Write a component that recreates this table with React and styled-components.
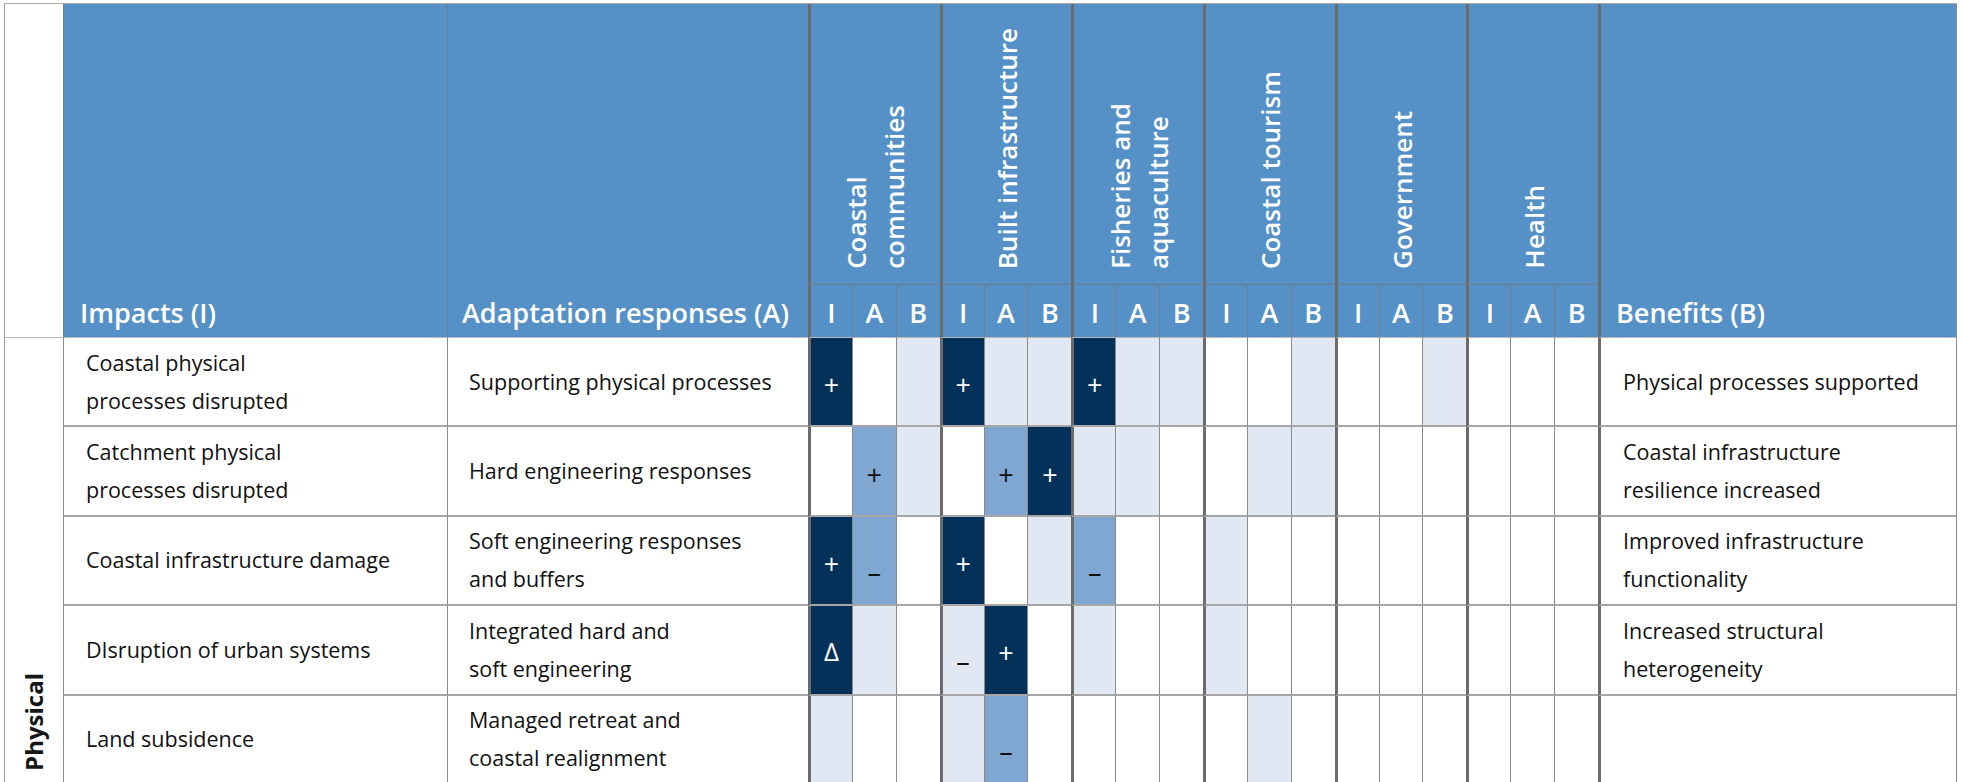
import React from "react";
import styled, { createGlobalStyle } from "styled-components";

const GlobalStyle = createGlobalStyle`
  html, body {
    margin: 0;
    padding: 0;
    background: #fff;
  }
  body {
    height: 782px;
    overflow: hidden;
    font-family: "Open Sans", "DejaVu Sans", sans-serif;
  }
`;

const c = {
  header: "#5591c6",
  navy: "#043159",
  mid: "#80a7d2",
  light: "#e1e8f4",
  groupLine: "#6b6b6b",
  thinLine: "#8a8a8a",
  rowLine: "#a6a6a6",
  headLine: "#737b84",
};

const fills = { n: c.navy, m: c.mid, l: c.light, w: "#fff" };

const Table = styled.div`
  display: grid;
  grid-template-columns: 59px 384px 361px repeat(18, 43.9px) 359px;
  grid-template-rows: 281px 53px repeat(5, 89.4px);
  width: max-content;
  margin: 3px 0 0 4px;
  border-top: 1px solid #a9a9a9;
`;

const Corner = styled.div`
  grid-row: 1 / span 2;
  background: #fff;
  border-left: 1px solid #9a9a9a;
  border-bottom: 1px solid #b8b8b8;
`;

const HeadCell = styled.div`
  grid-row: 1 / span 2;
  display: flex;
  align-items: flex-end;
  padding: 0 0 11px ${({ $pad }) => $pad || 15}px;
  background: ${c.header};
  border-left: ${({ $thick }) => ($thick ? `3px solid ${c.groupLine}` : `1px solid ${c.headLine}`)};
  border-right: ${({ $last }) => ($last ? `1px solid ${c.thinLine}` : "none")};
  border-bottom: 1px solid #b8b8b8;
  color: #fff;
  font-size: 27px;
  font-weight: 600;
  line-height: 27px;
  white-space: nowrap;
`;

const GroupHead = styled.div`
  grid-column: span 3;
  display: flex;
  align-items: flex-end;
  justify-content: center;
  padding-bottom: 15px;
  background: ${c.header};
  border-left: 3px solid ${c.groupLine};
  border-bottom: 1px solid ${c.headLine};
`;

const VerticalLabel = styled.span`
  writing-mode: vertical-rl;
  transform: rotate(180deg);
  color: #fff;
  font-size: 26px;
  font-weight: 600;
  line-height: 38px;
  white-space: pre;
`;

const SubHead = styled.div`
  display: flex;
  align-items: flex-end;
  justify-content: center;
  padding-bottom: 11px;
  background: ${c.header};
  border-left: ${({ $first }) => ($first ? `3px solid ${c.groupLine}` : `1px solid ${c.headLine}`)};
  border-bottom: 1px solid #b8b8b8;
  color: #fff;
  font-size: 27px;
  font-weight: 600;
  line-height: 27px;
`;

const CategoryCell = styled.div`
  grid-row: 3 / span 5;
  display: flex;
  align-items: flex-end;
  justify-content: center;
  padding-bottom: 14px;
  border-left: 1px solid #9a9a9a;
`;

const CategoryLabel = styled.span`
  writing-mode: vertical-rl;
  transform: rotate(180deg);
  color: #161616;
  font-size: 24px;
  font-weight: 700;
  line-height: 1;
`;

const TextCell = styled.div`
  display: flex;
  align-items: center;
  padding-left: ${({ $pad }) => $pad || 22}px;
  border-left: ${({ $thick }) => ($thick ? `3px solid ${c.groupLine}` : `1px solid ${c.thinLine}`)};
  border-right: ${({ $last }) => ($last ? `1px solid ${c.thinLine}` : "none")};
  border-bottom: 2px solid ${c.rowLine};
  color: #111;
  font-size: 21.5px;
  line-height: 38px;
  white-space: pre-line;
`;

const Mark = styled.div`
  display: flex;
  align-items: center;
  justify-content: center;
  background: ${({ $fill }) => fills[$fill]};
  border-left: ${({ $first }) => ($first ? `3px solid ${c.groupLine}` : `1px solid ${c.thinLine}`)};
  border-bottom: 2px solid ${c.rowLine};
  color: ${({ $fill }) => ($fill === "n" ? "#fff" : "#111")};
  line-height: 1;
`;

const Sign = styled.span`
  font-size: ${({ $size }) => $size}px;
  font-weight: 400;
  transform: translateY(${({ $shift }) => $shift}px);
`;

const groups = [
  "Coastal\ncommunities",
  "Built infrastructure",
  "Fisheries and\naquaculture",
  "Coastal tourism",
  "Government",
  "Health",
];

const rows = [
  {
    impact: "Coastal physical\nprocesses disrupted",
    response: "Supporting physical processes",
    benefit: "Physical processes supported",
    marks: ["n+", "w", "l", "n+", "l", "l", "n+", "l", "l", "w", "w", "l", "w", "w", "l", "w", "w", "w"],
  },
  {
    impact: "Catchment physical\nprocesses disrupted",
    response: "Hard engineering responses",
    benefit: "Coastal infrastructure\nresilience increased",
    marks: ["w", "m+", "l", "w", "m+", "n+", "l", "l", "w", "w", "l", "l", "w", "w", "w", "w", "w", "w"],
  },
  {
    impact: "Coastal infrastructure damage",
    response: "Soft engineering responses\nand buffers",
    benefit: "Improved infrastructure\nfunctionality",
    marks: ["n+", "m-", "w", "n+", "w", "l", "m-", "w", "w", "l", "w", "w", "w", "w", "w", "w", "w", "w"],
  },
  {
    impact: "DIsruption of urban systems",
    response: "Integrated hard and\nsoft engineering",
    benefit: "Increased structural\nheterogeneity",
    marks: ["nΔ", "l", "w", "l-", "n+", "w", "l", "w", "w", "l", "w", "w", "w", "w", "w", "w", "w", "w"],
  },
  {
    impact: "Land subsidence",
    response: "Managed retreat and\ncoastal realignment",
    benefit: "",
    marks: ["l", "w", "w", "l", "m-", "w", "w", "w", "w", "w", "l", "w", "w", "w", "w", "w", "w", "w"],
  },
];

// size and vertical nudge for each sign
const signs = {
  "+": { text: "+", size: 27, shift: 3 },
  "-": { text: "–", size: 27, shift: 11 },
  "Δ": { text: "Δ", size: 26, shift: 1 },
};

const MarkCell = ({ code, index }) => {
  const fill = code[0];
  const sign = signs[code[1]];
  return (
    <Mark $fill={fill} $first={index % 3 === 0}>
      {sign && (
        <Sign $size={sign.size} $shift={sign.shift}>
          {sign.text}
        </Sign>
      )}
    </Mark>
  );
};

const App = () => {
  return (
    <>
      <GlobalStyle />
      <Table>
        <Corner />
        <HeadCell $pad={16}>Impacts (I)</HeadCell>
        <HeadCell $pad={14}>Adaptation responses (A)</HeadCell>
        {groups.map((g) => (
          <GroupHead key={g}>
            <VerticalLabel>{g}</VerticalLabel>
          </GroupHead>
        ))}
        <HeadCell $thick $last $pad={15} style={{ gridColumn: 22 }}>
          Benefits (B)
        </HeadCell>
        {groups.map((g) =>
          ["I", "A", "B"].map((l, i) => (
            <SubHead key={g + l} $first={i === 0} style={{ gridRow: 2 }}>
              {l}
            </SubHead>
          ))
        )}

        <CategoryCell>
          <CategoryLabel>Physical</CategoryLabel>
        </CategoryCell>
        {rows.map((r, ri) => (
          <React.Fragment key={ri}>
            <TextCell style={{ gridColumn: 2 }}>{r.impact}</TextCell>
            <TextCell $pad={21}>{r.response}</TextCell>
            {r.marks.map((m, i) => (
              <MarkCell key={i} code={m} index={i} />
            ))}
            <TextCell $thick $last $pad={22}>{r.benefit}</TextCell>
          </React.Fragment>
        ))}
      </Table>
    </>
  );
};

export default App;
